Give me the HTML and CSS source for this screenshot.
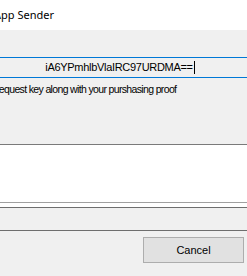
FILE: index.html
```html
<!DOCTYPE html>
<html lang="en">
<head>
    <meta charset="UTF-8">
    <title>App Sender</title>
    <link rel="stylesheet" href="styles.css">
</head>
<body>
    <div class="window">
        <div class="titlebar">
            <span class="title">App Sender</span>
        </div>
        <div class="panel">
            <div class="keybox">
                <span class="key">iA6YPmhlbVlaIRC97URDMA==</span><span class="caret"></span>
            </div>
            <p class="label">request key along with your purshasing proof</p>
        </div>
        <div class="output"></div>
        <div class="gap"></div>
        <div class="status"></div>
        <div class="footer">
            <button class="button">Cancel</button>
        </div>
    </div>
</body>
</html>
```

FILE: styles.css
```css
* {
    box-sizing: border-box;
}
body {
    margin: 0;
    padding: 0;
    background-color: #f0f0f0;
    font-family: "Liberation Sans", Arial, sans-serif;
    font-size: 11px;
    color: #000;
    overflow: hidden;
}
.window {
    width: 247px;
    height: 276px;
    overflow: hidden;
}
.titlebar {
    height: 30px;
    background-color: #fff;
    padding-top: 6px;
    font-family: "Noto Sans", sans-serif;
    font-size: 11px;
    line-height: 17px;
    white-space: nowrap;
}
.title {
    display: inline-block;
    margin-left: -6px;
}
.panel {
    height: 114px;
    padding-top: 27px;
}
.keybox {
    height: 21px;
    width: 266px;
    margin-left: -13px;
    border-top: 1px solid #0078d7;
    border-bottom: 1px solid #0078d7;
    background-color: #f0f0f0;
    text-align: center;
    line-height: 19px;
    white-space: nowrap;
}
.key {
    letter-spacing: -0.3px;
}
.caret {
    display: inline-block;
    width: 1px;
    height: 13px;
    background-color: #000;
    vertical-align: -3px;
    margin-left: 1px;
}
.label {
    margin: 5px 0 0 -4px;
    font-size: 10.5px;
    letter-spacing: -0.65px;
    line-height: 13px;
    white-space: nowrap;
}
.output {
    height: 59px;
    background-color: #fff;
    border-top: 1px solid #7a7a7a;
    border-bottom: 1px solid #a0a0a0;
}
.gap {
    height: 4px;
    background-color: #fff;
}
.status {
    height: 24px;
    border-top: 1px solid #6e6e6e;
    border-bottom: 1px solid #6e6e6e;
}
.footer {
    display: flex;
    justify-content: flex-end;
    padding: 6px 3px 0 0;
}
.button {
    width: 101px;
    height: 26px;
    background-color: #e1e1e1;
    border: 1px solid #adadad;
    font-family: "Liberation Sans", Arial, sans-serif;
    font-size: 11px;
    color: #000;
    padding: 0;
}
```
